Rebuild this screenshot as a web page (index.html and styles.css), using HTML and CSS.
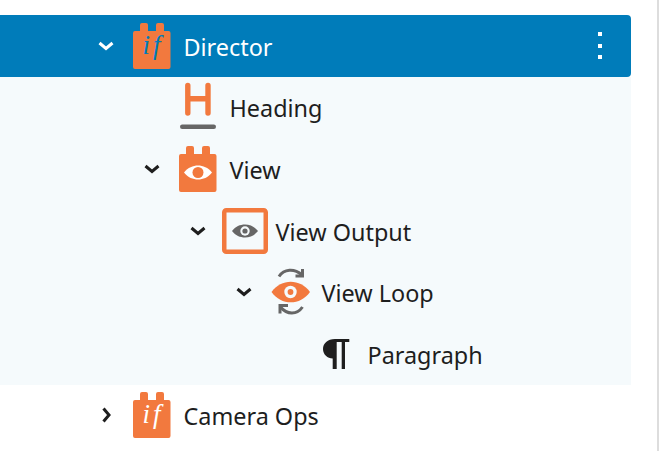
FILE: index.html
```html
<!DOCTYPE html>
<html lang="en">
<head>
  <meta charset="UTF-8" />
  <meta name="viewport" content="width=device-width, initial-scale=1.0"/>
  <title>List view</title>
  <link rel="stylesheet" href="styles.css">
</head>
<body>
  <div class="page">
    <div class="tree">

      <!-- Selected block -->
      <div class="row selected depth-0">
        <svg class="chevron" viewBox="0 0 24 24"><polyline points="5.5,9 12,14.5 18.5,9"/></svg>
        <span class="icon">
          <svg class="icon-block" viewBox="0 0 40 46">
            <path class="fill" d="M7 8V2a2 2 0 0 1 2-2h4a2 2 0 0 1 2 2v6h8V2a2 2 0 0 1 2-2h4a2 2 0 0 1 2 2v6h4.500a2 2 0 0 1 2 2v34a2 2 0 0 1-2 2H2a2 2 0 0 1-2-2V10a2 2 0 0 1 2-2z"/>
            <text class="if-text if-blue" x="20" y="31">if</text>
          </svg>
        </span>
        <span class="label">Director</span>
        <span class="kebab"><i></i><i></i><i></i></span>
      </div>

      <div class="row child depth-1">
        <span class="chevron"></span>
        <span class="icon">
          <svg class="icon-heading" viewBox="0 0 40 50">
            <path class="heading-h" d="M8.800 3.500V31M29 3.500V31M8.800 16.800H29"/>
            <rect class="grey" x="1" y="42.500" width="36" height="4.500" rx="2.200"/>
          </svg>
        </span>
        <span class="label">Heading</span>
      </div>

      <div class="row child depth-1">
        <svg class="chevron" viewBox="0 0 24 24"><polyline points="5.5,9 12,14.5 18.5,9"/></svg>
        <span class="icon">
          <svg class="icon-block" viewBox="0 0 40 46">
            <path class="fill" d="M7 8V2a2 2 0 0 1 2-2h4a2 2 0 0 1 2 2v6h8V2a2 2 0 0 1 2-2h4a2 2 0 0 1 2 2v6h4.500a2 2 0 0 1 2 2v34a2 2 0 0 1-2 2H2a2 2 0 0 1-2-2V10a2 2 0 0 1 2-2z"/>
            <path class="white" d="M5 26.500C9 21.500 14 19.500 19 19.500s10 2 14 7c-4 5-9 7-14 7s-10-2-14-7z"/>
            <circle class="fill" cx="19" cy="26.500" r="5.500"/>
          </svg>
        </span>
        <span class="label">View</span>
      </div>

      <div class="row child depth-2">
        <svg class="chevron" viewBox="0 0 24 24"><polyline points="5.5,9 12,14.5 18.5,9"/></svg>
        <span class="icon">
          <svg class="icon-square" viewBox="0 0 46 46">
            <rect class="square" x="2.250" y="2.250" width="41.500" height="41.500" rx="2"/>
            <path class="grey" d="M10 23C13.500 18.500 18 16.500 23 16.500s9.500 2 13 6.500c-3.500 4.500-8 6.500-13 6.500s-9.500-2-13-6.500z"/>
            <circle class="pale" cx="23" cy="23" r="4.700"/>
            <circle class="grey" cx="23" cy="23" r="2.600"/>
          </svg>
        </span>
        <span class="label">View Output</span>
      </div>

      <div class="row child depth-3">
        <svg class="chevron" viewBox="0 0 24 24"><polyline points="5.5,9 12,14.5 18.5,9"/></svg>
        <span class="icon">
          <svg class="icon-loop" viewBox="0 0 40 50">
            <path class="fill" d="M0.500 25C5.500 18 12.500 14.700 19.700 14.700S34 18 39 25c-5 7-12 10.300-19.300 10.300S5.500 32 0.500 25z"/>
            <circle class="pale" cx="19.500" cy="25" r="6.200"/>
            <circle class="fill" cx="19.500" cy="25" r="2.900"/>
            <path class="arrow" d="M8 9.500C13 2 23 1 31 8"/>
            <path class="arrow" d="M24.500 9H31.500V2"/>
            <path class="arrow" d="M31.500 40C26 48 16 48 9.500 40"/>
            <path class="arrow" d="M17 38.500H9V46.500"/>
          </svg>
        </span>
        <span class="label">View Loop</span>
      </div>

      <div class="row child depth-4">
        <span class="chevron"></span>
        <span class="icon">
          <svg class="icon-para" viewBox="0 0 40 46">
            <path class="dark" d="M32.300 8H18C10.500 8 6 12.500 6 18s4.500 9.500 9.700 9.500V38h4V11h5V38H28V11h4.300z"/>
          </svg>
        </span>
        <span class="label">Paragraph</span>
      </div>

      <div class="row depth-0">
        <svg class="chevron" viewBox="0 0 24 24"><polyline points="9.500,5.500 15,12 9.500,18.500"/></svg>
        <span class="icon">
          <svg class="icon-block" viewBox="0 0 40 46">
            <path class="fill" d="M7 8V2a2 2 0 0 1 2-2h4a2 2 0 0 1 2 2v6h8V2a2 2 0 0 1 2-2h4a2 2 0 0 1 2 2v6h4.500a2 2 0 0 1 2 2v34a2 2 0 0 1-2 2H2a2 2 0 0 1-2-2V10a2 2 0 0 1 2-2z"/>
            <text class="if-text if-white" x="20" y="31">if</text>
          </svg>
        </span>
        <span class="label">Camera Ops</span>
      </div>

    </div>
    <div class="divider"></div>
  </div>
</body>
</html>
```
FILE: styles.css
```css
:root {
  --orange: #f2793e;
  --blue: #007cba;
  --pale: #f5fafc;
  --text: #1e1e1e;
  --grey: #666;
}

* {
  box-sizing: border-box;
}

body {
  margin: 0;
  background: #fff;
  color: var(--text);
  font-family: "Noto Sans", "Open Sans", sans-serif;
  overflow: hidden;
}

.page {
  display: flex;
  height: 451px;
}

.tree {
  width: 631px;
  padding-top: 15px;
}

.divider {
  width: 2px;
  margin-left: 26px;
  background: #ddd;
}

.row {
  display: flex;
  align-items: center;
  height: 61.6px;
  font-size: 23.4px;
}

.row.child {
  background: var(--pale);
}

.row.selected {
  background: var(--blue);
  color: #fff;
  border-radius: 0 4px 4px 0;
}

.depth-0 { padding-left: 94px; }
.depth-1 { padding-left: 140px; }
.depth-2 { padding-left: 186px; }
.depth-3 { padding-left: 232px; }
.depth-4 { padding-left: 278px; }

.chevron {
  flex: none;
  width: 24px;
  height: 24px;
  margin-right: 15px;
  fill: none;
  stroke: currentColor;
  stroke-width: 3;
}

.icon {
  flex: none;
  display: flex;
  justify-content: center;
  width: 40px;
  margin-right: 10.5px;
}

.icon svg {
  flex: none;
  display: block;
  overflow: visible;
}

.icon-block,
.icon-para {
  width: 40px;
  height: 46px;
}

.icon-heading,
.icon-loop {
  width: 40px;
  height: 50px;
}

.icon-square {
  width: 46px;
  height: 46px;
}

.label {
  line-height: 32px;
  padding-top: 2px;
}

.kebab {
  display: flex;
  flex-direction: column;
  gap: 7.5px;
  margin-left: auto;
  margin-right: 29px;
}

.kebab i {
  display: block;
  width: 4px;
  height: 4px;
  background: #fff;
}

.fill { fill: var(--orange); }
.white { fill: #fff; }
.pale { fill: var(--pale); }
.grey { fill: var(--grey); }
.dark { fill: var(--text); }

.if-text {
  font-family: "Liberation Serif", serif;
  font-style: italic;
  font-size: 27px;
  letter-spacing: 3px;
  text-anchor: middle;
}

.if-blue { fill: var(--blue); }
.if-white { fill: #fff; }

.heading-h {
  fill: none;
  stroke: var(--orange);
  stroke-width: 5.400;
  stroke-linecap: round;
}

.square {
  fill: none;
  stroke: var(--orange);
  stroke-width: 4.500;
}

.arrow {
  fill: none;
  stroke: var(--grey);
  stroke-width: 3;
}
```
